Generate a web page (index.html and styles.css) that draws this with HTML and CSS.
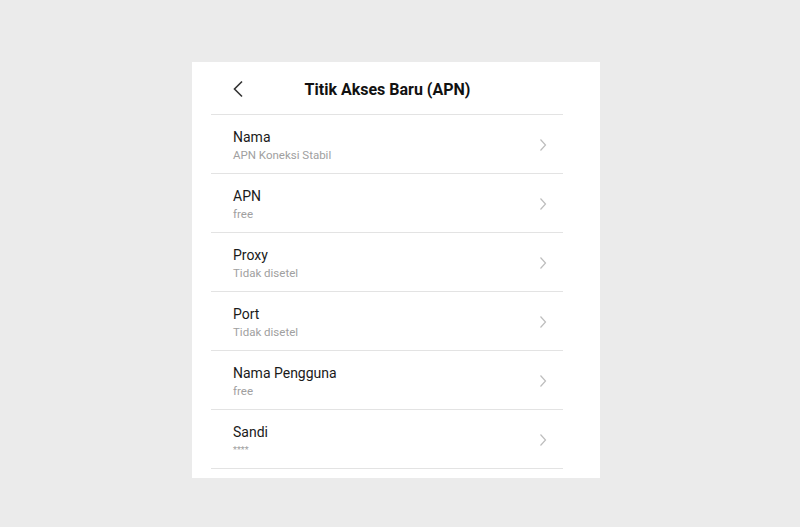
FILE: index.html
```html
<!DOCTYPE html>
<html lang="id">
<head>
    <meta charset="utf-8">
    <title>Titik Akses Baru (APN)</title>
    <link rel="stylesheet" href="styles.css">
</head>
<body>
<div class="screen">
    <div class="page">
        <div class="header">
            <a href="#" class="back">
                <svg width="12" height="18" viewBox="0 0 12 18"><path d="M10 1.5 L2.5 9 L10 16.5" fill="none" stroke="#333" stroke-width="1.6"/></svg>
            </a>
            <div class="title">Titik Akses Baru (APN)</div>
        </div>
        <div class="list">
            <div class="row">
                <div class="text">
                    <div class="label">Nama</div>
                    <div class="value">APN Koneksi Stabil</div>
                </div>
                <svg class="arrow" width="8" height="14" viewBox="0 0 8 14"><path d="M1.5 1.5 L6.5 7 L1.5 12.5" fill="none" stroke="#bdbdbd" stroke-width="1.2"/></svg>
            </div>
            <div class="row">
                <div class="text">
                    <div class="label">APN</div>
                    <div class="value">free</div>
                </div>
                <svg class="arrow" width="8" height="14" viewBox="0 0 8 14"><path d="M1.5 1.5 L6.5 7 L1.5 12.5" fill="none" stroke="#bdbdbd" stroke-width="1.2"/></svg>
            </div>
            <div class="row">
                <div class="text">
                    <div class="label">Proxy</div>
                    <div class="value">Tidak disetel</div>
                </div>
                <svg class="arrow" width="8" height="14" viewBox="0 0 8 14"><path d="M1.5 1.5 L6.5 7 L1.5 12.5" fill="none" stroke="#bdbdbd" stroke-width="1.2"/></svg>
            </div>
            <div class="row">
                <div class="text">
                    <div class="label">Port</div>
                    <div class="value">Tidak disetel</div>
                </div>
                <svg class="arrow" width="8" height="14" viewBox="0 0 8 14"><path d="M1.5 1.5 L6.5 7 L1.5 12.5" fill="none" stroke="#bdbdbd" stroke-width="1.2"/></svg>
            </div>
            <div class="row">
                <div class="text">
                    <div class="label">Nama Pengguna</div>
                    <div class="value">free</div>
                </div>
                <svg class="arrow" width="8" height="14" viewBox="0 0 8 14"><path d="M1.5 1.5 L6.5 7 L1.5 12.5" fill="none" stroke="#bdbdbd" stroke-width="1.2"/></svg>
            </div>
            <div class="row">
                <div class="text">
                    <div class="label">Sandi</div>
                    <div class="value stars">****</div>
                </div>
                <svg class="arrow" width="8" height="14" viewBox="0 0 8 14"><path d="M1.5 1.5 L6.5 7 L1.5 12.5" fill="none" stroke="#bdbdbd" stroke-width="1.2"/></svg>
            </div>
        </div>
    </div>
</div>
</body>
</html>
```
FILE: styles.css
```css
html, body {
    margin: 0;
    padding: 0;
    background-color: #ebebeb;
    font-family: Roboto, "Liberation Sans", Arial, sans-serif;
}

.screen {
    width: 408px;
    height: 416px;
    margin: 62px 0 0 192px;
    background-color: #fff;
    overflow: hidden;
}

.page {
    width: 352px;
    padding: 0 0 0 19px;
}

.header {
    display: flex;
    align-items: center;
    height: 50px;
    padding-top: 2px;
    border-bottom: 1px solid #e3e3e3;
}

.back {
    display: flex;
    margin-left: 21px;
}

.title {
    flex: 1;
    margin-right: 32px;
    text-align: center;
    font-size: 16px;
    font-weight: bold;
    color: #111;
}

.row {
    display: flex;
    align-items: center;
    height: 56px;
    padding: 2px 16px 0 22px;
    border-bottom: 1px solid #e3e3e3;
}

.text {
    flex: 1;
}

.label {
    font-size: 14px;
    color: #1a1a1a;
    line-height: 17px;
}

.value {
    margin-top: 2px;
    font-size: 11.5px;
    color: #a0a0a0;
    line-height: 14px;
}

.stars {
    font-size: 9px;
}

.arrow {
    display: block;
}
```
